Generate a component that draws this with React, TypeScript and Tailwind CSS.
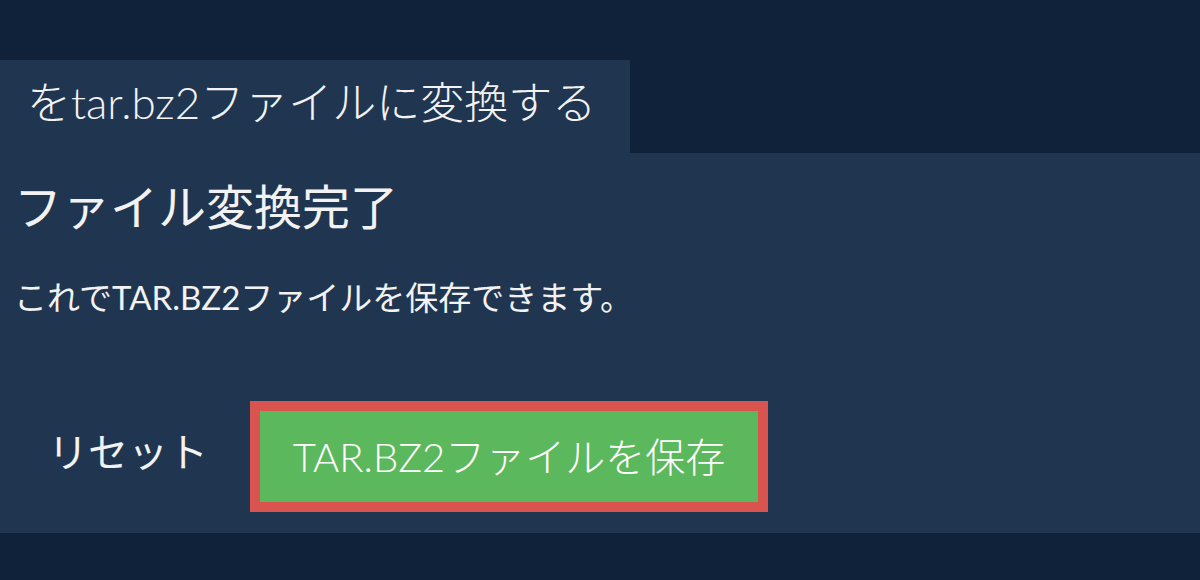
import React from "react";

const font = { fontFamily: 'Lato, "Noto Sans CJK JP", sans-serif' };

const App = () => {
  return (
    <div className="w-[1200px] h-[580px] bg-[#0f2239] pt-[60px] text-[#f2f2f2]" style={font}>
      <div className="w-[630px] h-[93px] bg-[#203550] flex items-center pl-[27px] pb-[10px] text-[44px] font-light">
        をtar.bz2ファイルに変換する
      </div>
      <div className="h-[380px] bg-[#203550] px-[14px] flex flex-col">
        <h1 className="mt-[18px] text-[48px] leading-[72px]">ファイル変換完了</h1>
        <p className="mt-[32px] text-[33px] leading-[45px]">
          これでTAR.BZ2ファイルを保存できます。
        </p>
        <div className="mt-[81px] flex items-center">
          <button className="w-[236px] pl-[34px] pb-[10px] text-left text-[40px] leading-[54px] text-[#f2f2f2]">
            リセット
          </button>
          <button className="w-[518px] h-[111px] border-[10px] border-[#d9534f] bg-[#5cb85c] text-[40px] text-white font-light flex items-center justify-center">
            TAR.BZ2ファイルを保存
          </button>
        </div>
      </div>
    </div>
  );
};

export default App;
